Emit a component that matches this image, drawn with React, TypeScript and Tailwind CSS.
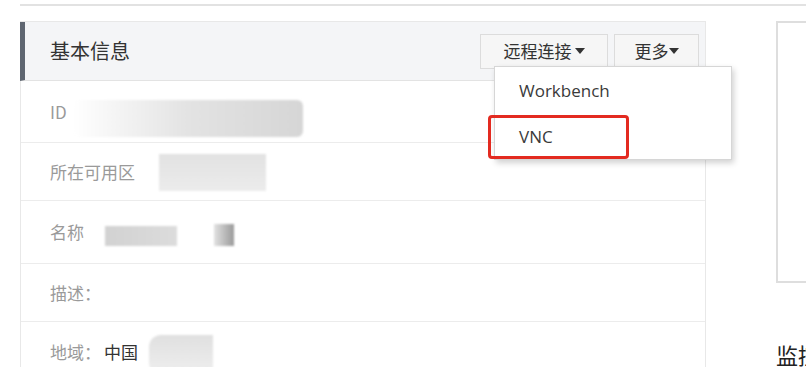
const CJK = "font-['Microsoft_YaHei','Noto_Sans_CJK_SC',sans-serif]";

function Caret() {
  return (
    <svg width="10" height="6" viewBox="0 0 10 6" className="inline-block">
      <path d="M0 0 L10 0 L5 6 Z" fill="#333" />
    </svg>
  );
}

function Blur({ className }: { className: string }) {
  return <div className={`absolute blur-[1px] ${className}`} />;
}

function Row({ label, children, h }: { label: string; children?: React.ReactNode; h: string }) {
  return (
    <div className={`relative flex items-center border-b border-[#ececec] pl-[29px] ${h}`}>
      <span className="text-[17px] text-[#9a9a9a]">{label}</span>
      {children}
    </div>
  );
}

export default function App() {
  return (
    <div className={`w-[806px] h-[367px] overflow-hidden bg-white ${CJK}`}>
      <div className="ml-[20px] mt-[4px] h-[2px] bg-[#e2e2e2]" />
      <div className="flex pt-[15px]">
        {/* info panel */}
        <div className="ml-[20px] w-[686px] shrink-0 border border-[#e8e8e8] border-l-0">
          <div className="relative flex h-[59px] items-center justify-between border-b border-[#e3e3e3] border-l-[5px] border-l-[#5f6671] bg-[#f4f5f7] pl-[25px] pr-[6px]">
            <span className="text-[20px] text-[#333]">基本信息</span>
            <div className="flex gap-[6px]">
              <div className="relative">
                <button className="flex h-[35px] w-[128px] items-center justify-center gap-[3px] border border-[#dcdcdc] bg-[#f6f6f6] text-[17px] text-[#333]">
                  远程连接 <Caret />
                </button>
                {/* dropdown */}
                <div className="absolute left-[14px] top-[32px] z-10 w-[238px] border border-[#d6d6d6] bg-white shadow-[2px_3px_6px_rgba(0,0,0,0.18)]">
                  <div className="flex h-[46px] items-center pl-[24px] pt-[3px] font-['Open_Sans',sans-serif] text-[17px] text-[#3a3a3a]">
                    Workbench
                  </div>
                  <div className="flex h-[46px] items-center pl-[24px] pt-[3px] font-['Open_Sans',sans-serif] text-[17px] text-[#3a3a3a]">
                    VNC
                  </div>
                  <div className="absolute left-[-7px] top-[48px] h-[44px] w-[141px] rounded-[4px] border-[3px] border-[#e32a20]" />
                </div>
              </div>
              <button className="flex h-[35px] w-[85px] items-center justify-center border border-[#dcdcdc] bg-[#f6f6f6] text-[17px] text-[#333]">
                更多<Caret />
              </button>
            </div>
          </div>
          <div className="border-l border-[#e8e8e8]">
            <Row label="ID" h="h-[62px]">
              <Blur className="left-[52px] top-[19px] h-[37px] w-[230px] rounded-[6px] bg-gradient-to-r from-white via-[#e3e3e3] to-[#d6d6d6]" />
            </Row>
            <Row label="所在可用区" h="h-[58px]">
              <Blur className="left-[138px] top-[11px] h-[37px] w-[107px] bg-gradient-to-b from-[#e2e2e2] to-[#ececec]" />
            </Row>
            <Row label="名称" h="h-[63px]">
              <Blur className="left-[84px] top-[25px] h-[20px] w-[72px] bg-gradient-to-r from-[#d2d2d2] to-[#dcdcdc]" />
              <Blur className="left-[193px] top-[23px] h-[22px] w-[20px] bg-gradient-to-r from-[#e2e2e2] to-[#9a9a9a]" />
            </Row>
            <Row label="描述：" h="h-[58px]" />
            <Row label="地域：" h="h-[60px]">
              <span className="ml-[3px] text-[17px] text-[#333]">中国</span>
              <Blur className="left-[128px] top-[13px] h-[40px] w-[64px] rounded-l-[12px] bg-gradient-to-b from-[#e0e0e0] to-[#efefef]" />
            </Row>
          </div>
        </div>
        {/* right column */}
        <div className="ml-[70px] flex w-[200px] shrink-0 flex-col">
          <div className="h-[262px] border-2 border-[#dedede] bg-white" />
          <div className="mt-[55px] text-[22px] text-[#222]">监控</div>
        </div>
      </div>
    </div>
  );
}
